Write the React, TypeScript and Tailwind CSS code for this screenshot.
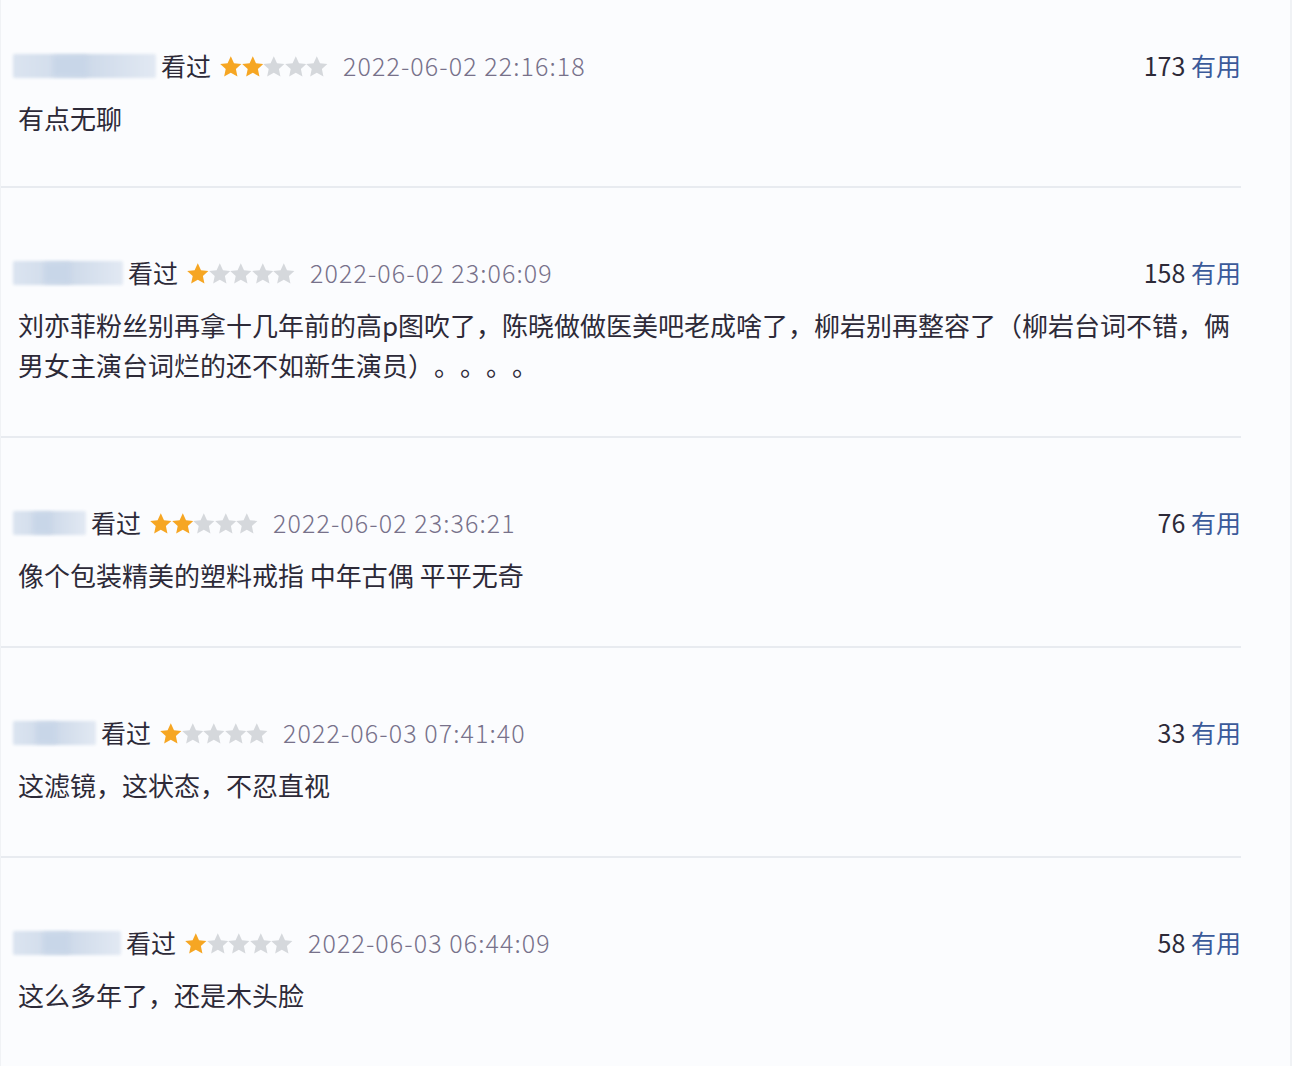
import React from "react";

type Review = {
  nameWidth: number;
  stars: number;
  date: string;
  useful: number;
  text: string;
};

const reviews: Review[] = [
  { nameWidth: 143, stars: 2, date: "2022-06-02 22:16:18", useful: 173, text: "有点无聊" },
  {
    nameWidth: 110,
    stars: 1,
    date: "2022-06-02 23:06:09",
    useful: 158,
    text: "刘亦菲粉丝别再拿十几年前的高p图吹了，陈晓做做医美吧老成啥了，柳岩别再整容了（柳岩台词不错，俩男女主演台词烂的还不如新生演员）。。。。",
  },
  { nameWidth: 73, stars: 2, date: "2022-06-02 23:36:21", useful: 76, text: "像个包装精美的塑料戒指 中年古偶 平平无奇" },
  { nameWidth: 83, stars: 1, date: "2022-06-03 07:41:40", useful: 33, text: "这滤镜，这状态，不忍直视" },
  { nameWidth: 108, stars: 1, date: "2022-06-03 06:44:09", useful: 58, text: "这么多年了，还是木头脸" },
];

const Star = ({ on }: { on: boolean }) => (
  <svg width="21.6" height="21" viewBox="1.6 1.6 20.8 20" className="shrink-0">
    <path
      d="M12 1.8l3.1 6.6 7.1.8-5.3 4.9 1.5 7.1L12 17.6l-6.4 3.6 1.5-7.1L1.8 9.2l7.1-.8z"
      fill={on ? "#f6a623" : "#d5d8dc"}
    />
  </svg>
);

const BlurName = ({ width }: { width: number }) => (
  <div className="relative h-[24px] shrink-0" style={{ width }}>
    <div className="absolute inset-0 rounded-[2px] bg-gradient-to-r from-[#dbe4f0] via-[#cdd9e9] to-[#e2e9f3] blur-[1.5px]" />
    <div className="absolute left-[28%] top-[2px] h-[20px] w-[24%] bg-[#c8d6e8] blur-[2px]" />
  </div>
);

const ReviewRow = ({ r, first }: { r: Review; first: boolean }) => (
  <div
    className={`border-b-2 border-[#e8ebf0] ${first ? "pt-[46px] pb-[48px]" : "pt-[65px] pb-[51px]"}`}
  >
    <div className="flex h-[40px] items-center pl-[12px]">
      <BlurName width={r.nameWidth} />
      <span className="ml-[5px] text-[25px] text-[#2d2a38]">看过</span>
      <div className="ml-[9px] flex items-center">
        {[0, 1, 2, 3, 4].map((i) => (
          <Star key={i} on={i < r.stars} />
        ))}
      </div>
      <span className="ml-[15px] text-[25px] font-light tracking-[1.1px] text-[#77718a]">{r.date}</span>
      <span className="ml-auto text-[25px] text-[#2d2a38]">
        {r.useful} <span className="text-[#3b5a9a]">有用</span>
      </span>
    </div>
    <p className="mt-[12px] w-[1240px] pl-[17px] text-[26px] leading-[40px] text-[#2d2a38] [text-spacing-trim:space-all]">
      {r.text}
    </p>
  </div>
);

export default function App() {
  return (
    <div
      className="h-[1066px] w-[1292px] overflow-hidden border-l border-r-2 border-[#f0f2f5] bg-[#fbfcfe]"
      style={{ fontFamily: '"Noto Sans CJK SC", "Noto Sans", sans-serif' }}
    >
      <div className="w-[1240px]">
        {reviews.map((r, i) => (
          <ReviewRow key={i} r={r} first={i === 0} />
        ))}
      </div>
    </div>
  );
}
